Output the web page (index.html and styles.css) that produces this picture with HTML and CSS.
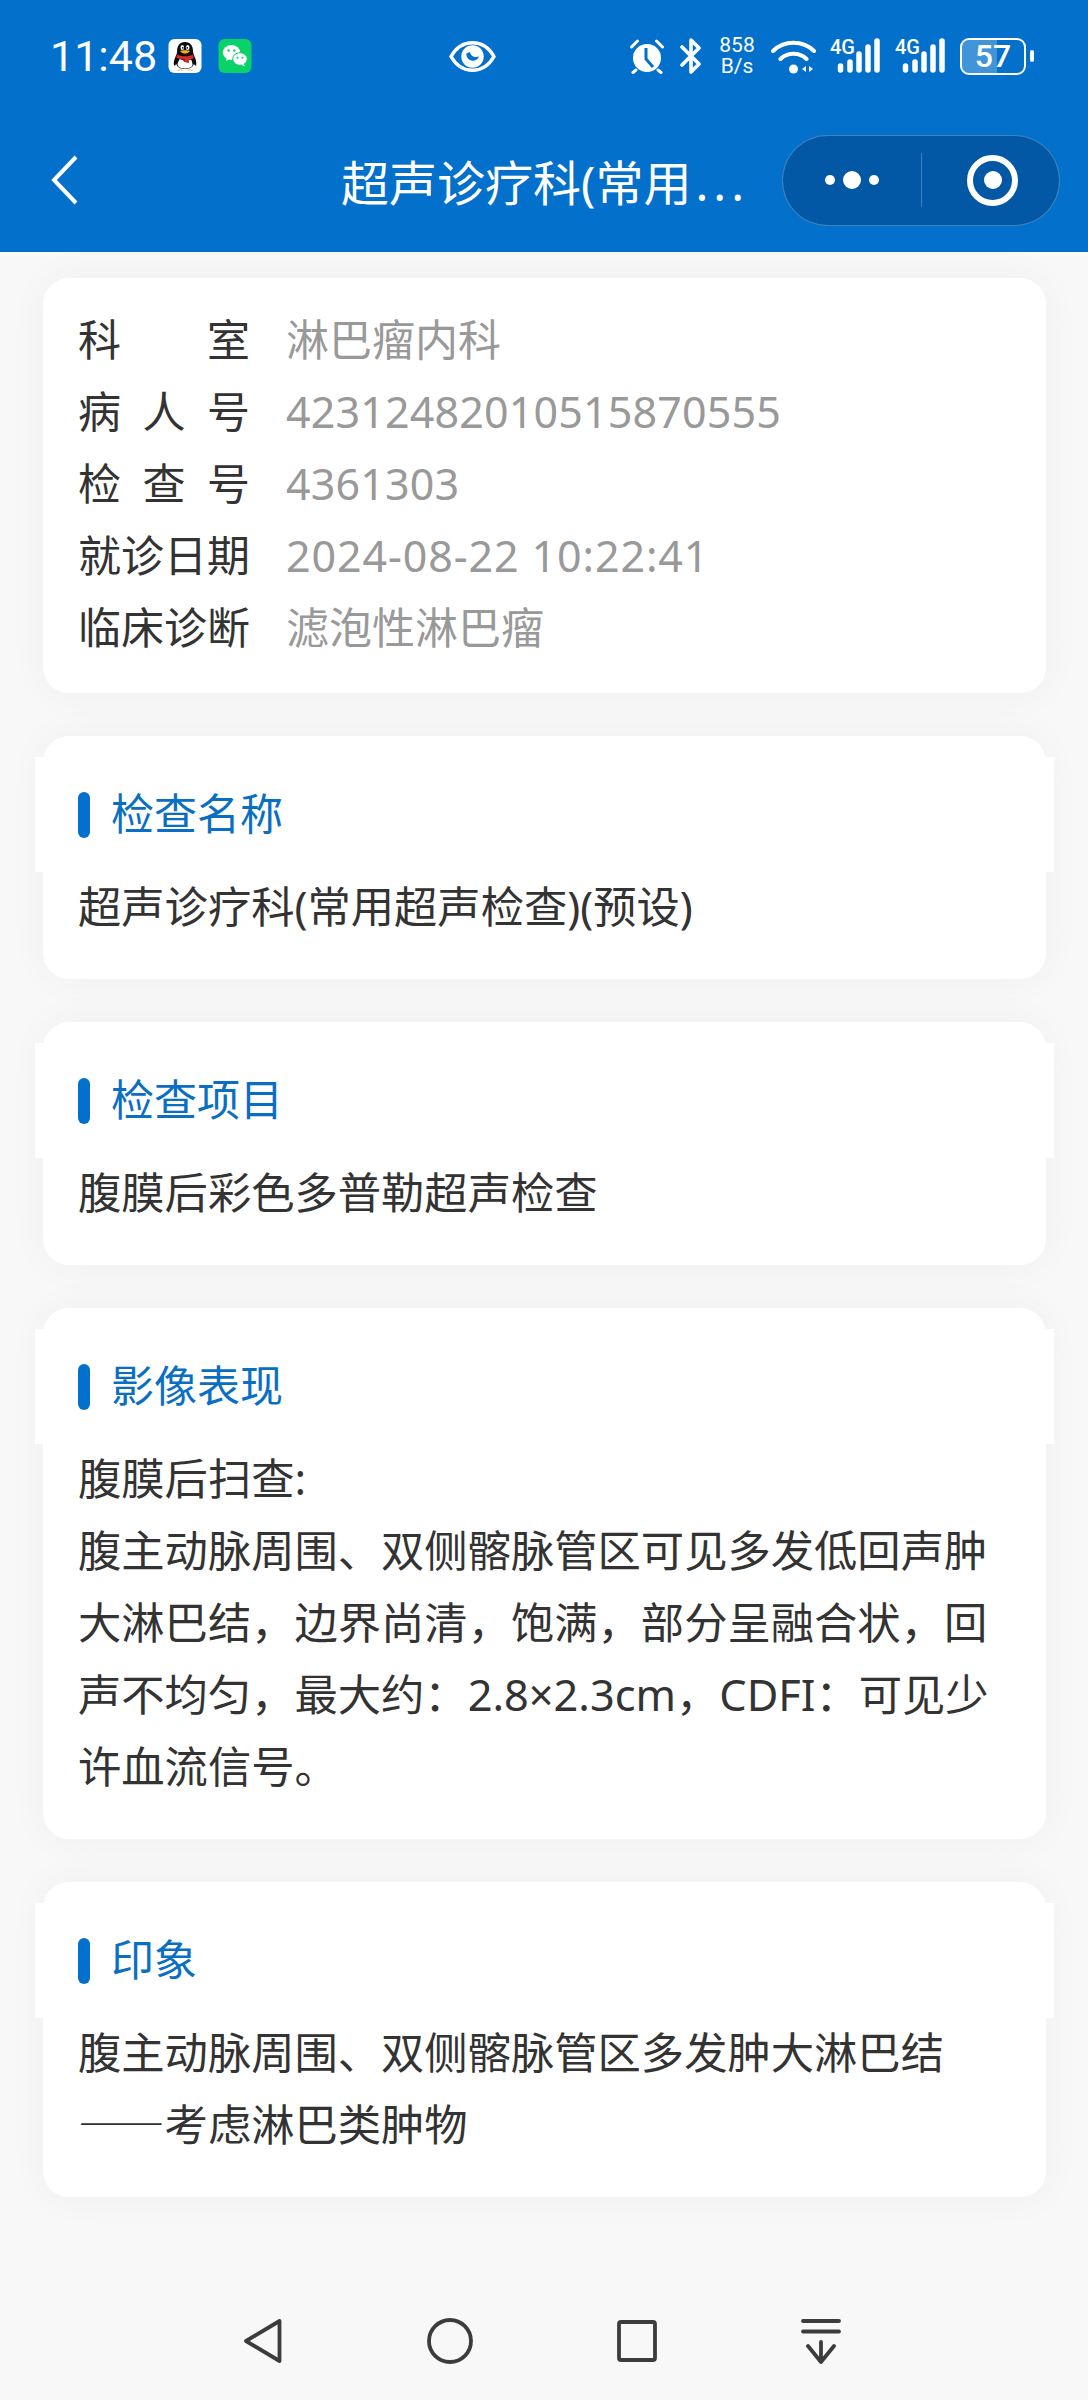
FILE: index.html
```html
<!DOCTYPE html>
<html lang="zh-CN">

<head>
    <meta charset="UTF-8">
    <meta name="viewport" content="width=device-width, initial-scale=1.0">
    <title>超声诊疗科</title>
    <link rel="stylesheet" href="styles.css">
</head>

<body>
    <div class="page">
        <header class="top">
            <div class="status">
                <span class="time">11:48</span>
                <svg class="app-icon qq" viewBox="0 0 33 34">
                    <rect width="33" height="34" rx="6" fill="#fff" />
                    <path d="M16.5 3C11 3 8.6 7 8.6 12c0 1.600-.3 2.800-1 4.300-1.500 3.200-2.800 7-2.200 9.700.5 1.200 1.500.2 2.400-1 .8 2.700 3.200 5 8.700 5s8-2.300 8.800-5c.9 1.200 1.900 2.200 2.400 1 .6-2.700-.7-6.500-2.200-9.700-.7-1.500-1-2.700-1-4.300C24.500 7 22 3 16.500 3z" fill="#0c0c10" />
                    <path d="M11 20c2 1 3 1 4 1v1.500l5 1v-2.500c1 0 2-.2 2.500-.5 1 1.500 1.500 4 1.500 5.500-.5 2.300-3 3.500-7.500 3.500S9.500 28 9 25.500c0-1.500 1-3.500 2-5z" fill="#fff" />
                    <path d="M8.800 15.500c2.200 2.400 13.200 2.400 15.500 0 .5 1.300.8 2.400 1 3.500-1.500 1-3.200 1.400-5 1.500v3.500l-4.500-1v-2.500c-2-.1-5.500-.5-8-2 .2-1 .5-2 1-3z" fill="#dc2a2a" />
                    <ellipse cx="13.800" cy="8.500" rx="1.800" ry="2.500" fill="#fff" />
                    <ellipse cx="19.200" cy="8.500" rx="1.800" ry="2.500" fill="#fff" />
                    <circle cx="14.200" cy="8.800" r=".9" fill="#111" />
                    <circle cx="18.800" cy="8.800" r=".9" fill="#111" />
                    <path d="M11.500 12c2-1 8-1 10 0-1.500 2-3.500 2.500-5 2.500s-3.500-.5-5-2.500z" fill="#f2b01e" />
                    <path d="M8 31.500c2-1.500 5-1.500 7 0zM18 31.500c2-1.500 5-1.500 7 0z" fill="#f2b01e" />
                </svg>
                <svg class="app-icon wechat" viewBox="0 0 33 34">
                    <rect width="33" height="34" rx="6" fill="#08d268" />
                    <ellipse cx="13" cy="13.500" rx="8.700" ry="7.500" fill="#fff" />
                    <path d="M8.500 18l-1 4 4-2.200z" fill="#fff" />
                    <ellipse cx="21.500" cy="20" rx="7.300" ry="6.300" fill="#fff" stroke="#08d268" />
                    <path d="M25 24.500l1.500 3-3.800-1.800z" fill="#fff" />
                    <circle cx="10" cy="11.500" r="1.200" fill="#08d268" />
                    <circle cx="15.800" cy="11.500" r="1.200" fill="#08d268" />
                    <circle cx="19" cy="18.800" r="1" fill="#08d268" />
                    <circle cx="24" cy="18.800" r="1" fill="#08d268" />
                </svg>

                <svg class="eye" viewBox="0 0 46 32">
                    <path d="M2 16C7 7 14 2.500 23 2.500S39 7 44 16c-5 9-12 13.500-21 13.500S7 25 2 16z" fill="none" stroke="#fff" stroke-width="3.400" />
                    <circle cx="23" cy="16" r="11" fill="#fff" />
                    <path d="M17 13a6.500 6.500 0 0 0 12.500 3c-3.500 1-8 .5-9-4.500z" fill="#0370cc" />
                </svg>

                <div class="status-right">
                    <svg class="alarm" viewBox="0 0 36 36">
                        <circle cx="18" cy="20" r="14" fill="#fff" />
                        <path d="M2.500 9l6-6M33.500 9l-6-6M7 32l-3 2.500M29 32l3 2.500" stroke="#fff" stroke-width="3" stroke-linecap="round" />
                        <path d="M17 10v11l7 8" fill="none" stroke="#0370cc" stroke-width="3" />
                    </svg>
                    <svg class="bluetooth" viewBox="0 0 22 36">
                        <path d="M2 9l17 17-8 8V2l8 8L2 27" fill="none" stroke="#fff" stroke-width="3.600" stroke-linejoin="round" stroke-linecap="round" />
                    </svg>
                    <div class="speed"><span>858</span><span>B/s</span></div>
                    <svg class="wifi" viewBox="0 0 45 36">
                        <path d="M2 13C13 2 32 2 43 13M9.500 21c7-7 19-7 26 0" fill="none" stroke="#fff" stroke-width="4" stroke-linecap="round" />
                        <circle cx="22.500" cy="31" r="4.500" fill="#fff" />
                        <path d="M35 28v6l-4-3zM38 28v6l4-3z" fill="#fff" />
                    </svg>
                    <div class="signal">
                        <span class="net">4G</span>
                        <svg viewBox="0 0 51 36">
                            <path d="M10.500 28v4M20 24v8M29 16v16M38 9v23M47 3v29" stroke="#fff" stroke-width="5.500" stroke-linecap="round" />
                        </svg>
                    </div>
                    <div class="signal">
                        <span class="net">4G</span>
                        <svg viewBox="0 0 51 36">
                            <path d="M10.500 28v4M20 24v8M29 16v16M38 9v23M47 3v29" stroke="#fff" stroke-width="5.500" stroke-linecap="round" />
                        </svg>
                    </div>
                    <div class="battery">
                        <div class="battery-body">
                            <div class="battery-level"></div>
                            <span>57</span>
                        </div>
                        <div class="battery-nub"></div>
                    </div>
                </div>
            </div>

            <div class="nav">
                <svg class="back" viewBox="0 0 27 50">
                    <path d="M25 2L3 25l22 23" fill="none" stroke="#fff" stroke-width="4" />
                </svg>
                <div class="nav-title">超声诊疗科(常用<span class="dots">...</span></div>
                <div class="capsule">
                    <div class="capsule-more">
                        <i class="dot"></i><i class="dot big"></i><i class="dot"></i>
                    </div>
                    <div class="capsule-line"></div>
                    <div class="capsule-close">
                        <div class="ring"><div class="ring-in"></div></div>
                    </div>
                </div>
            </div>
        </header>

        <main class="content">
            <section class="card info">
                <div class="row"><div class="label"><span>科</span><span>室</span></div><div class="value">淋巴瘤内科</div></div>
                <div class="row"><div class="label"><span>病</span><span>人</span><span>号</span></div><div class="value num">42312482010515870555</div></div>
                <div class="row"><div class="label"><span>检</span><span>查</span><span>号</span></div><div class="value num">4361303</div></div>
                <div class="row"><div class="label">就诊日期</div><div class="value date">2024-08-22 10:22:41</div></div>
                <div class="row"><div class="label">临床诊断</div><div class="value">滤泡性淋巴瘤</div></div>
            </section>

            <section class="card">
                <h2 class="card-head"><span>检查名称</span></h2>
                <p class="card-text">超声诊疗科(常用超声检查)(预设)</p>
            </section>

            <section class="card">
                <h2 class="card-head"><span>检查项目</span></h2>
                <p class="card-text">腹膜后彩色多普勒超声检查</p>
            </section>

            <section class="card">
                <h2 class="card-head"><span>影像表现</span></h2>
                <p class="card-text">腹膜后扫查:<br>腹主动脉周围、双侧髂脉管区可见多发低回声肿大淋巴结，边界尚清，饱满，部分呈融合状，回声不均匀，最大约：2.8×2.3cm，CDFI：可见少许血流信号。</p>
            </section>

            <section class="card">
                <h2 class="card-head"><span>印象</span></h2>
                <p class="card-text">腹主动脉周围、双侧髂脉管区多发肿大淋巴结<br><span class="dash">——</span>考虑淋巴类肿物</p>
            </section>
        </main>

        <footer class="softkeys">
            <svg class="key" viewBox="0 0 40 46">
                <path d="M36.500 3L3 23l33.500 20z" fill="none" stroke="#3c3c3c" stroke-width="3.800" stroke-linejoin="round" />
            </svg>
            <svg class="key" viewBox="0 0 46 46">
                <circle cx="23" cy="23" r="21" fill="none" stroke="#3c3c3c" stroke-width="3.800" />
            </svg>
            <svg class="key" viewBox="0 0 40 46">
                <rect x="2" y="4" width="36" height="38" rx="2" fill="none" stroke="#3c3c3c" stroke-width="3.800" />
            </svg>
            <svg class="key" viewBox="0 0 40 46">
                <path d="M2 3h36M2 13.500h36M20 24v20M7 28l13 16 13-16" fill="none" stroke="#3c3c3c" stroke-width="3.800" stroke-linecap="round" stroke-linejoin="round" />
            </svg>
        </footer>
    </div>
</body>

</html>
```
FILE: styles.css
```css
* {
    box-sizing: border-box;
}

body {
    margin: 0;
    background-color: #f8f8f8;
    font-family: "Noto Sans", "Noto Sans CJK SC", sans-serif;
    color: #333333;
}

.page {
    display: flex;
    flex-direction: column;
    height: 2400px;
    overflow: hidden;
}

.top {
    height: 252px;
    background-color: #0370cc;
    color: #ffffff;
}

.status {
    display: flex;
    align-items: center;
    height: 112px;
    padding: 0 54px 0 50px;
}

.time {
    width: 118px;
    font-family: Roboto, sans-serif;
    font-size: 43px;
    line-height: 1;
}

.app-icon {
    width: 34px;
    height: 34px;
    margin-right: 16px;
}

.eye {
    width: 47px;
    height: 33px;
    margin-left: 181px;
}

.status-right {
    display: flex;
    align-items: center;
    margin-left: auto;
}

.alarm {
    width: 36px;
    height: 36px;
    margin-right: 15px;
}

.bluetooth {
    width: 22px;
    height: 36px;
    margin-right: 16px;
}

.speed {
    display: flex;
    flex-direction: column;
    align-items: center;
    width: 38px;
    margin-right: 15px;
    font-family: Roboto, sans-serif;
    font-size: 21px;
    line-height: 21px;
}

.wifi {
    width: 45px;
    height: 36px;
    margin-right: 14px;
}

.signal {
    position: relative;
    width: 51px;
    height: 36px;
    margin-right: 14px;
}

.signal svg {
    display: block;
    width: 51px;
    height: 36px;
}

.net {
    position: absolute;
    top: -1px;
    left: 0;
    font-family: Roboto, sans-serif;
    font-size: 20px;
    font-weight: 500;
    line-height: 20px;
}

.battery {
    display: flex;
    align-items: center;
    gap: 4px;
}

.battery-body {
    position: relative;
    display: flex;
    align-items: center;
    justify-content: center;
    width: 66px;
    height: 37px;
    border: 2px solid #ffffff;
    border-radius: 9px;
    overflow: hidden;
}

.battery-level {
    position: absolute;
    top: 0;
    bottom: 0;
    left: 0;
    width: 57%;
    background-color: rgba(255, 255, 255, 0.25);
}

.battery-body span {
    position: relative;
    font-family: Roboto, sans-serif;
    font-size: 32px;
    font-weight: 500;
    line-height: 1;
}

.battery-nub {
    width: 4px;
    height: 12px;
    border-radius: 2px;
    background-color: #ffffff;
}

.nav {
    display: flex;
    align-items: center;
    height: 136px;
    padding: 0 28px 0 51px;
}

.back {
    width: 27px;
    height: 50px;
}

.nav-title {
    margin-left: 263px;
    margin-right: auto;
    font-size: 48px;
    white-space: nowrap;
}

.dots {
    margin-left: 4px;
    letter-spacing: 5px;
}

.capsule {
    display: flex;
    align-items: center;
    width: 278px;
    height: 91px;
    border: 1px solid rgba(255, 255, 255, 0.25);
    border-radius: 46px;
    background-color: #0258a5;
}

.capsule-more {
    display: flex;
    align-items: center;
    justify-content: center;
    gap: 8px;
    width: 138px;
}

.dot {
    width: 10px;
    height: 10px;
    border-radius: 50%;
    background-color: #ffffff;
}

.dot.big {
    width: 18px;
    height: 18px;
}

.capsule-line {
    width: 1px;
    height: 54px;
    background-color: rgba(255, 255, 255, 0.25);
}

.capsule-close {
    display: flex;
    flex: 1;
    align-items: center;
    justify-content: center;
    padding-left: 4px;
}

.ring {
    display: flex;
    align-items: center;
    justify-content: center;
    width: 51px;
    height: 51px;
    border: 6px solid #ffffff;
    border-radius: 50%;
}

.ring-in {
    width: 18px;
    height: 18px;
    border-radius: 50%;
    background-color: #ffffff;
}

.content {
    display: flex;
    flex-direction: column;
    gap: 43px;
    flex: 1;
    padding: 26px 42px 0 43px;
}

.card {
    padding: 21px 35px 36px;
    border-radius: 26px;
    background-color: #ffffff;
    box-shadow: 0 0 40px rgba(0, 0, 0, 0.04);
}

.card.info {
    padding: 26px 35px 29px;
}

.row {
    display: flex;
    height: 72px;
    font-size: 43px;
    line-height: 72px;
}

.label {
    display: flex;
    justify-content: space-between;
    width: 172px;
    margin-right: 36px;
    color: #333333;
    white-space: nowrap;
}

.value {
    color: #999999;
}

.num {
    letter-spacing: 0.15px;
}

.date {
    letter-spacing: 0.9px;
}

.card-head {
    display: flex;
    align-items: center;
    height: 115px;
    margin: 0 -43px;
    padding-left: 43px;
    background-color: #ffffff;
    color: #0a6fc2;
    font-size: 43px;
    font-weight: 400;
}

.card-head span {
    margin-bottom: 6px;
}

.card-head::before {
    content: "";
    width: 12px;
    height: 46px;
    margin-right: 21px;
    border-radius: 6px;
    background-color: #0370cc;
}

.card-text {
    margin: -1px 0 0;
    font-size: 43.3px;
    line-height: 72px;
}

.dash {
    font-family: "Noto Sans CJK SC", sans-serif;
    line-height: 1;
}

.softkeys {
    display: flex;
    align-items: center;
    justify-content: space-between;
    height: 118px;
    padding: 0 247px 0 243px;
}

.key {
    height: 46px;
}
```
